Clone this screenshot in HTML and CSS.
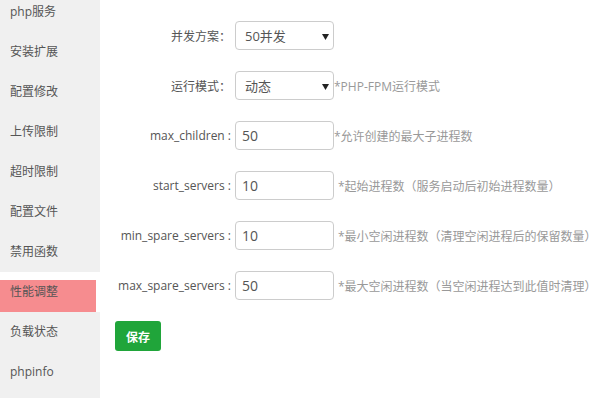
FILE: index.html
```html
<!DOCTYPE html>
<html lang="zh-CN">
<head>
<meta charset="utf-8">
<title>性能调整</title>
<link rel="stylesheet" href="styles.css">
</head>
<body>
<div class="layout">
  <ul class="menu">
    <li class="menu-item">php服务</li>
    <li class="menu-item">安装扩展</li>
    <li class="menu-item">配置修改</li>
    <li class="menu-item">上传限制</li>
    <li class="menu-item">超时限制</li>
    <li class="menu-item">配置文件</li>
    <li class="menu-item">禁用函数</li>
    <li class="menu-item active">性能调整</li>
    <li class="menu-item">负载状态</li>
    <li class="menu-item">phpinfo</li>
  </ul>
  <div class="content">
    <div class="row">
      <span class="label">并发方案：</span>
      <select class="field select"><option>50并发</option></select>
    </div>
    <div class="row">
      <span class="label">运行模式：</span>
      <select class="field select"><option>动态</option></select>
      <span class="help">*PHP-FPM运行模式</span>
    </div>
    <div class="row">
      <span class="label">max_children :</span>
      <input class="field input" type="text" value="50">
      <span class="help">*允许创建的最大子进程数</span>
    </div>
    <div class="row">
      <span class="label">start_servers :</span>
      <input class="field input" type="text" value="10">
      <span class="help help-indent">*起始进程数（服务启动后初始进程数量）</span>
    </div>
    <div class="row">
      <span class="label">min_spare_servers :</span>
      <input class="field input" type="text" value="10">
      <span class="help help-indent">*最小空闲进程数（清理空闲进程后的保留数量）</span>
    </div>
    <div class="row">
      <span class="label">max_spare_servers :</span>
      <input class="field input" type="text" value="50">
      <span class="help help-indent">*最大空闲进程数（当空闲进程达到此值时清理）</span>
    </div>
    <button class="btn-save" type="button">保存</button>
  </div>
</div>
</body>
</html>
```
FILE: styles.css
```css
* { box-sizing: border-box; }
html, body {
  margin: 0;
  padding: 0;
  background: #fff;
  height: 100%;
  overflow: hidden;
}
body {
  font-family: "Open Sans", "Noto Sans CJK SC", sans-serif;
  font-size: 12px;
  color: #555;
}
.layout {
  display: flex;
  height: 100%;
}
.menu {
  list-style: none;
  margin: -8px 0 0 0;
  padding: 0;
  width: 100px;
  flex: none;
  background: #f0f0f0;
  height: calc(100% + 8px);
}
.menu-item {
  height: 40px;
  line-height: 40px;
  padding-left: 10px;
  font-size: 12px;
  color: #555;
}
.menu-item.active {
  background: #fff linear-gradient(#f68c8f, #f68c8f) 0 8px / 96px 32px no-repeat;
  color: #555;
}
.content {
  padding: 21px 0 0 15px;
  flex: 1;
}
.row {
  display: flex;
  align-items: center;
  height: 29px;
  margin-bottom: 21px;
}
.label {
  width: 120px;
  flex: none;
  text-align: right;
  padding-right: 4px;
  color: #555;
  white-space: nowrap;
}
.field {
  width: 99px;
  height: 29px;
  border: 1px solid #ccc;
  border-radius: 4px;
  background: #fff;
  color: #555;
  font-family: "Open Sans", "Noto Sans CJK SC", sans-serif;
  outline: none;
  margin: 0;
  flex: none;
}
.select {
  appearance: none;
  -webkit-appearance: none;
  font-size: 13px;
  padding: 0 0 0 9px;
  background: #fff url("data:image/svg+xml,%3Csvg xmlns='http://www.w3.org/2000/svg' width='7' height='6'%3E%3Cpolygon points='0,0 7,0 3.5,6' fill='%23222'/%3E%3C/svg%3E") no-repeat 86px 12px;
}
.input {
  font-size: 14px;
  padding: 0 0 0 6px;
}
.help {
  color: #999;
  font-size: 12px;
  white-space: nowrap;
}
.help-indent {
  padding-left: 4px;
}
.btn-save {
  display: block;
  width: 46px;
  height: 30px;
  margin: 0;
  padding: 0;
  border: none;
  border-radius: 3px;
  background: #20a53a;
  color: #fff;
  font-family: "Noto Sans CJK SC", sans-serif;
  font-size: 12px;
  font-weight: bold;
}
```
